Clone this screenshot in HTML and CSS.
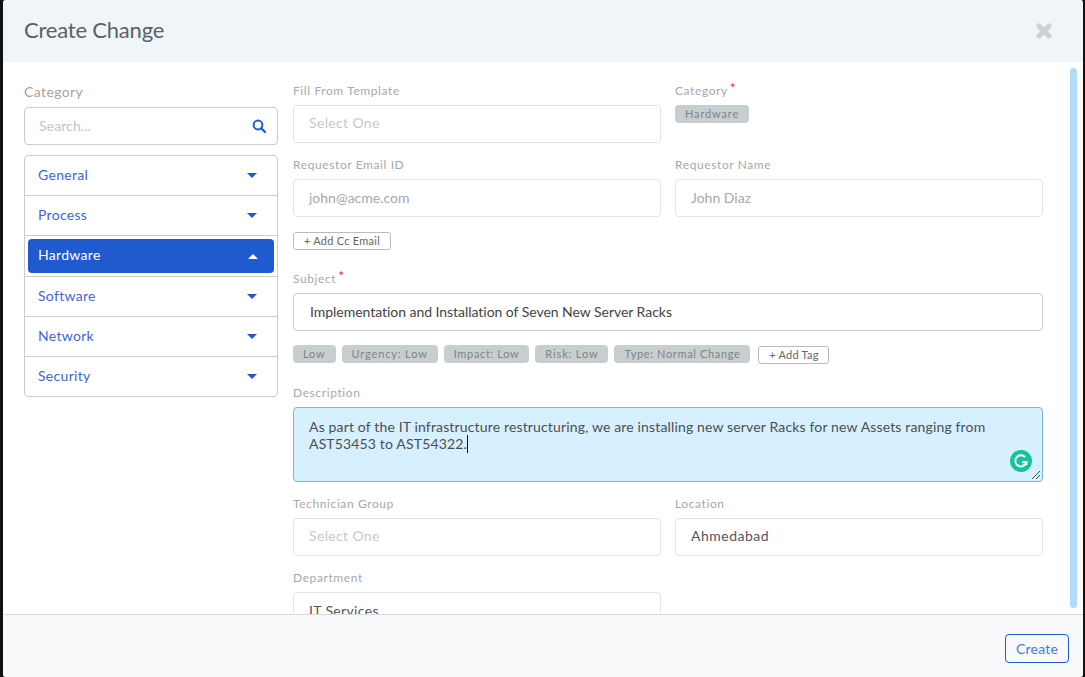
FILE: index.html
```html
<!DOCTYPE html>
<html lang="en">
<head>
<meta charset="utf-8">
<title>Create Change</title>
<link rel="stylesheet" href="styles.css">
</head>
<body>
<div class="modal">
  <header class="modal-header">
    <h1 class="modal-title">Create Change</h1>
    <svg class="close-icon" width="18" height="16" viewBox="0 0 18 16"><path d="M4 3 L14 13 M14 3 L4 13" stroke="#ccd1d1" stroke-width="5" stroke-linecap="round" fill="none"/></svg>
  </header>
  <main class="modal-body">
    <aside class="sidebar">
      <div class="sidebar-title">Category</div>
      <div class="search-box">
        <span class="search-placeholder">Search...</span>
        <svg class="search-icon" width="14" height="14" viewBox="0 0 14 14"><circle cx="6" cy="6" r="4.4" stroke="#1f5bcf" stroke-width="2" fill="none"/><path d="M9.4 9.4 L13 13" stroke="#1f5bcf" stroke-width="2.2" stroke-linecap="round"/></svg>
      </div>
      <ul class="cat-list">
        <li class="cat-row"><span class="cat-item">General<i class="caret"></i></span></li>
        <li class="cat-row"><span class="cat-item">Process<i class="caret"></i></span></li>
        <li class="cat-row cat-row-active"><span class="cat-item cat-item-active">Hardware<i class="caret caret-up"></i></span></li>
        <li class="cat-row"><span class="cat-item">Software<i class="caret"></i></span></li>
        <li class="cat-row"><span class="cat-item">Network<i class="caret"></i></span></li>
        <li class="cat-row"><span class="cat-item">Security<i class="caret"></i></span></li>
      </ul>
    </aside>
    <section class="form">
      <div class="form-grid">
        <div class="field">
          <div class="label">Fill From Template</div>
          <div class="input placeholder">Select One</div>
        </div>
        <div class="field">
          <div class="label">Category<sup class="req">*</sup></div>
          <div class="chips"><span class="chip">Hardware</span></div>
        </div>
        <div class="field">
          <div class="label">Requestor Email ID</div>
          <div class="input muted">john@acme.com</div>
        </div>
        <div class="field">
          <div class="label">Requestor Name</div>
          <div class="input muted">John Diaz</div>
        </div>
      </div>
      <div class="cc-row"><span class="add-btn">+ Add Cc Email</span></div>
      <div class="subject">
        <div class="label">Subject<sup class="req">*</sup></div>
        <div class="input input-strong">Implementation and Installation of Seven New Server Racks</div>
      </div>
      <div class="tags">
        <span class="chip">Low</span>
        <span class="chip">Urgency: Low</span>
        <span class="chip chip-tight">Impact: Low</span>
        <span class="chip">Risk: Low</span>
        <span class="chip chip-tight">Type: Normal Change</span>
        <span class="add-btn add-tag">+ Add Tag</span>
      </div>
      <div class="description">
        <div class="label">Description</div>
        <div class="textarea">As part of the IT infrastructure restructuring, we are installing new server Racks for new Assets ranging from AST53453 to AST54322.<span class="text-caret"></span>
          <svg class="grammarly" width="22" height="22" viewBox="0 0 22 22"><circle cx="11" cy="11" r="11" fill="#15c39a"/><path d="M15.2 7.2 A5.6 5.6 0 1 0 16.4 12.2 L12 12.2" fill="none" stroke="#fff" stroke-width="1.9"/><path d="M12.8 14.6 L16.6 14.6 L16.6 11" fill="none" stroke="#fff" stroke-width="1.4"/></svg>
          <svg class="resize-grip" width="10" height="10" viewBox="0 0 10 10"><path d="M1 9 L9 1 M5 9 L9 5" stroke="#444" stroke-width="1"/></svg>
        </div>
      </div>
      <div class="form-grid form-grid-lower">
        <div class="field">
          <div class="label">Technician Group</div>
          <div class="input placeholder">Select One</div>
        </div>
        <div class="field">
          <div class="label">Location</div>
          <div class="input filled">Ahmedabad</div>
        </div>
        <div class="field">
          <div class="label">Department</div>
          <div class="input filled filled-low">IT Services</div>
        </div>
      </div>
    </section>
    <div class="scrollbar"></div>
  </main>
  <footer class="modal-footer">
    <span class="create-btn">Create</span>
  </footer>
</div>
</body>
</html>
```
FILE: styles.css
```css
* { box-sizing: border-box; }
html, body { margin: 0; height: 100%; }
body {
  background: #111;
  padding: 0 2px 0 3px;
  font-family: "Lato", "Noto Sans", sans-serif;
  overflow: hidden;
}
.modal {
  height: 677px;
  background: #fff;
  display: flex;
  flex-direction: column;
  border-radius: 3px;
  overflow: hidden;
}
.modal-header {
  height: 62px;
  flex: none;
  background: #f0f5f8;
  display: flex;
  align-items: center;
  justify-content: space-between;
  padding: 0 30px 0 21px;
}
.modal-title {
  margin: 0 0 3px;
  font-size: 22px;
  font-weight: 400;
  color: #5a6266;
  letter-spacing: -0.2px;
}
.close-icon { display: block; }
.modal-body {
  flex: 1;
  min-height: 0;
  position: relative;
  overflow: hidden;
  display: flex;
  padding: 21px 0 0 21px;
  gap: 15px;
}
.sidebar { width: 254px; flex: none; }
.sidebar-title {
  font-size: 14px;
  line-height: 18px;
  color: #a9a297;
  letter-spacing: 0.4px;
  margin-bottom: 6px;
}
.search-box {
  height: 38px;
  border: 1px solid #ccc;
  border-radius: 4px;
  display: flex;
  align-items: center;
  justify-content: space-between;
  padding: 0 11px 2px 14px;
}
.search-placeholder { font-size: 14px; color: #c4c4c4; letter-spacing: 0.1px; }
.search-icon { display: block; margin-top: 2px; }
.cat-list {
  list-style: none;
  margin: 10px 0 0;
  padding: 0;
  border: 1px solid #ccc;
  border-radius: 4px;
}
.cat-row { height: 40px; border-top: 1px solid #ccc; }
.cat-row:first-child { height: 39px; border-top: 0; }
.cat-row-active { height: 41px; padding: 3px; }
.cat-item {
  height: 100%;
  display: flex;
  align-items: center;
  justify-content: space-between;
  padding: 0 20px 2px 13px;
  font-size: 14px;
  color: #3f66d6;
  letter-spacing: 0.3px;
}
.cat-item-active {
  background: #1f5bcf;
  color: #fff;
  border-radius: 4px;
  padding: 0 16px 4px 10px;
}
.caret {
  width: 0;
  height: 0;
  margin-top: 2px;
  border-left: 5px solid transparent;
  border-right: 5px solid transparent;
  border-top: 5px solid #1f5bcf;
}
.caret-up { margin-top: 4px; border-top: 0; border-bottom: 5px solid #fff; }
.form { width: 750px; flex: none; }
.form-grid {
  display: grid;
  grid-template-columns: 368px 368px;
  column-gap: 14px;
  row-gap: 14px;
}
.form-grid-lower { margin-top: 14px; }
.label {
  font-size: 12px;
  line-height: 16px;
  height: 16px;
  margin-bottom: 6px;
  color: #a8a8a8;
  letter-spacing: 0.6px;
}
.req {
  color: #e0343a;
  font-size: 14px;
  line-height: 0;
  margin-left: 2px;
  vertical-align: 2px;
}
.input {
  height: 38px;
  border: 1px solid #e2e4e5;
  border-radius: 4px;
  padding: 0 15px 2px;
  display: flex;
  align-items: center;
  font-size: 14px;
  letter-spacing: 0.35px;
}
.placeholder { color: #c9c9c9; padding-bottom: 4px; }
.muted { color: #a8a8a8; letter-spacing: 0; }
.filled { color: #555; letter-spacing: 0.5px; padding-bottom: 4px; }
.filled-low { padding-bottom: 2px; letter-spacing: 0.35px; }
.input-strong { border-color: #ccc; color: #444; letter-spacing: -0.04px; padding: 0 16px 2px; }
.chips { display: flex; }
.chip {
  display: inline-flex;
  align-items: center;
  height: 18px;
  padding: 0 10px 2px;
  background: #c8cecf;
  border-radius: 4px;
  font-size: 11px;
  color: #7c8486;
  letter-spacing: 0.85px;
}
.chip-tight { letter-spacing: 0.65px; }
.cc-row { margin-top: 15px; display: flex; }
.add-btn {
  height: 18px;
  display: inline-flex;
  align-items: center;
  justify-content: center;
  width: 98px;
  border: 1px solid #bbb;
  border-radius: 3px;
  padding-bottom: 1px;
  font-size: 11px;
  color: #666;
  letter-spacing: 0.25px;
}
.subject { margin-top: 21px; width: 750px; }
.tags { margin-top: 14px; display: flex; gap: 6px; height: 18px; }
.add-tag { width: 71px; margin-left: 2px; margin-top: 1px; }
.description { margin-top: 22px; width: 750px; }
.textarea {
  position: relative;
  height: 75px;
  background: #d7f0ff;
  border: 1px solid #7fb4d8;
  border-radius: 4px;
  padding: 10px 40px 0 15px;
  font-size: 14px;
  line-height: 17px;
  color: #4a4f52;
  letter-spacing: 0.15px;
}
.text-caret {
  display: inline-block;
  width: 1px;
  height: 18px;
  background: #111;
  vertical-align: top;
}
.grammarly { position: absolute; right: 10px; bottom: 9px; }
.resize-grip { position: absolute; right: 1px; bottom: 1px; }
.scrollbar {
  position: absolute;
  top: 6px;
  right: 6px;
  bottom: 6px;
  width: 7px;
  background: #b1dcf9;
  border-radius: 3px;
}
.modal-footer {
  height: 63px;
  flex: none;
  background: #f8f9fb;
  border-top: 1px solid #d9dcdf;
  display: flex;
  align-items: center;
  justify-content: flex-end;
  padding: 4px 14px 0 0;
}
.create-btn {
  width: 64px;
  height: 29px;
  display: flex;
  align-items: center;
  justify-content: center;
  border: 1px solid #1f5bcf;
  border-radius: 4px;
  font-size: 14px;
  color: #4a78d8;
  letter-spacing: 0.2px;
}
```
